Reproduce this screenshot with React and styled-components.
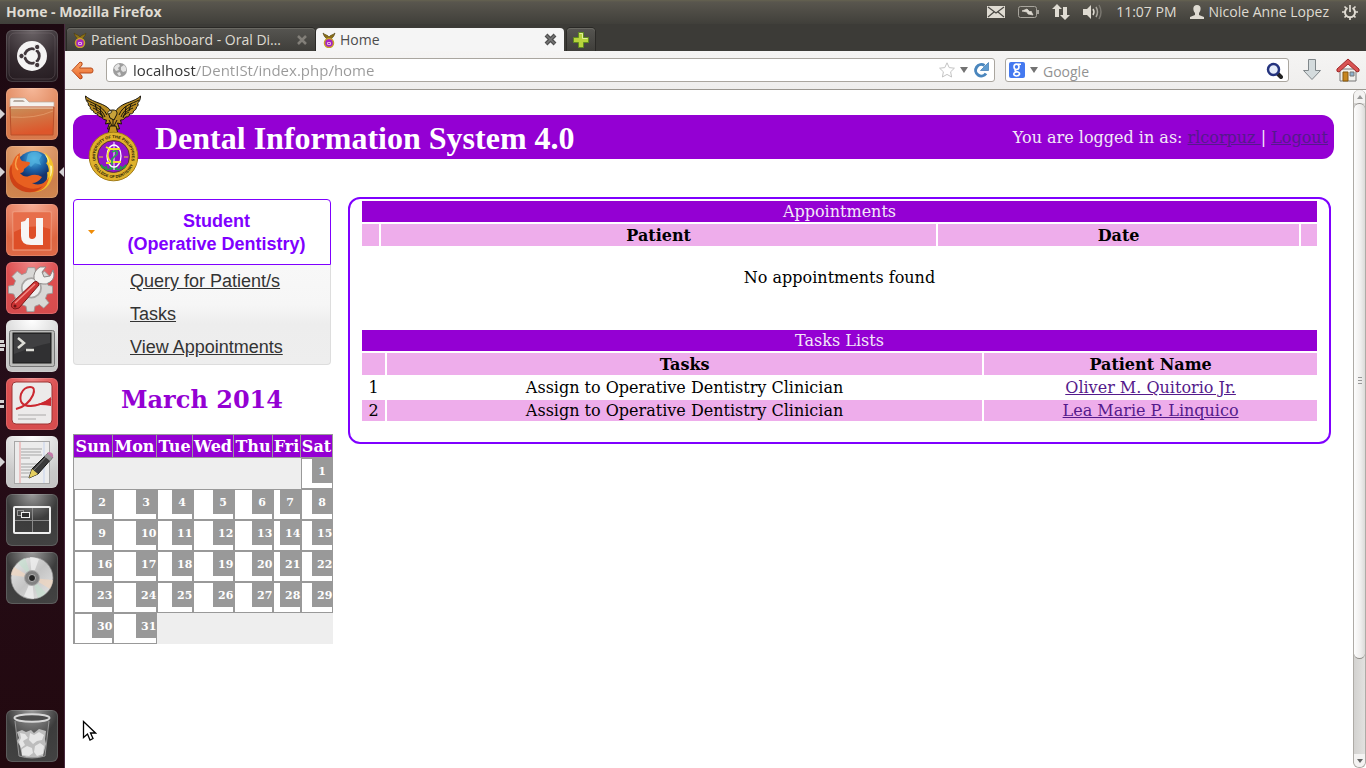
import React from "react";
import styled, { createGlobalStyle, css } from "styled-components";

const ui = '"Open Sans", "Noto Sans", sans-serif';
const serif = '"DejaVu Serif", serif';
const violet = "#9400d3";
const outline = "#7f00ff";

const GlobalStyle = createGlobalStyle`
  * { box-sizing: border-box; }
  body { margin: 0; background: #fff; }
  button { font: inherit; border: 0; padding: 0; background: none; cursor: pointer; }
  svg { display: block; flex: none; }
`;

const Desktop = styled.div`
  min-height: 100vh;
  display: flex;
  flex-direction: column;
  font-family: ${ui};
  font-size: 14px;
`;

/* ---------- top panel ---------- */
const TopPanel = styled.header`
  height: 24px;
  flex: none;
  display: flex;
  align-items: center;
  justify-content: space-between;
  padding: 0 8px 0 6px;
  background: linear-gradient(#656250, #59564e 2px, #403f3a);
  color: #dfdbd2;
  line-height: 20px;
`;
const PanelTitle = styled.strong`
  font-weight: 700;
`;
const Indicators = styled.div`
  display: flex;
  align-items: center;
  gap: 13px;
`;
const Session = styled.button`
  display: flex;
  align-items: center;
  gap: 5px;
  color: inherit;
`;

const Workspace = styled.div`
  flex: 1;
  display: flex;
`;

/* ---------- launcher ---------- */
const Launcher = styled.nav`
  width: 65px;
  flex: none;
  display: flex;
  flex-direction: column;
  gap: 6px;
  padding: 6px;
  border-right: 1px solid #4a2b40;
  background: linear-gradient(#1d0911, #260d19 50%, #22090f);
`;
const tints = {
  dark: "radial-gradient(circle at 50% 0, #6b6467, #342b30 55%, #241a1f)",
  folder: "radial-gradient(circle at 50% 0, #f6b899, #d9794c 70%, #d7784b)",
  fox: "radial-gradient(circle at 50% 0, #eeb184, #cc7f4c 70%, #d08850)",
  orange: "radial-gradient(circle at 50% 0, #f8ae97, #dd6541 70%, #de6b49)",
  red: "radial-gradient(circle at 50% 0, #ef8686, #dc4f50 45%, #d54b4d)",
  light: "radial-gradient(circle at 50% 0, #fff, #c9c9c9 70%, #c3c3c3)",
  grey: "radial-gradient(circle at 50% 0, #9b9b9b, #3c3c3c 45%, #434343)",
};
const Tile = styled.button`
  position: relative;
  width: 52px;
  height: 52px;
  flex: none;
  border-radius: 6px;
  background: ${(p) => tints[p.$tint]};
  box-shadow: inset 0 0 0 1px rgba(255, 255, 255, 0.14);
  ${(p) => p.$last && css`margin-top: auto;`}
`;
const Pips = styled.svg`
  position: absolute;
  top: 20px;
  ${(p) => (p.$right ? "right: -6px;" : "left: -6px;")}
`;

/* ---------- browser chrome ---------- */
const Browser = styled.main`
  flex: 1;
  min-width: 0;
  display: flex;
  flex-direction: column;
`;
const TabStrip = styled.div`
  height: 27px;
  flex: none;
  display: flex;
  align-items: flex-end;
  gap: 1px;
  padding-left: 2px;
  background: #3c3b37;
`;
const Tab = styled.div`
  height: 23px;
  width: 248px;
  display: flex;
  align-items: center;
  gap: 4px;
  padding: 0 7px 0 6px;
  border-radius: 4px 4px 0 0;
  ${(p) =>
    p.$active
      ? css`
          background: #f5f5f5;
          color: #4c4c4c;
        `
      : css`
          background: linear-gradient(#565551, #3f3e3a);
          box-shadow: 0 0 0 1px #2a2926, inset 0 1px #6a6963;
          color: #dfdbd2;
        `}
`;
const TabName = styled.button`
  flex: 1;
  min-width: 0;
  color: inherit;
  text-align: left;
  line-height: 20px;
  white-space: nowrap;
`;
const IconButton = styled.button`
  display: flex;
  align-items: center;
  justify-content: center;
`;
const NewTab = styled(IconButton)`
  width: 28px;
  height: 23px;
  margin-left: 2px;
  border-radius: 4px 4px 0 0;
  background: linear-gradient(#565551, #3f3e3a);
  box-shadow: 0 0 0 1px #2a2926, inset 0 1px #6a6963;
`;
const Toolbar = styled.div`
  height: 39px;
  flex: none;
  display: flex;
  align-items: center;
  gap: 10px;
  padding: 0 6px;
  border-bottom: 1px solid #9b9790;
  background: linear-gradient(#f5f4f3, #efeeed);
`;
const Field = styled.div`
  height: 24px;
  display: flex;
  align-items: center;
  gap: 5px;
  padding: 0 5px;
  border: 1px solid #aaa69f;
  border-radius: 3px;
  background: #fff;
  ${(p) => (p.$grow ? "flex: 1; min-width: 0; margin-left: 2px;" : "width: 284px; padding-left: 3px;")}
`;
const TextInput = styled.input`
  flex: 1;
  min-width: 0;
  height: 22px;
  border: 0;
  padding: 2px 0 0;
  outline: 0;
  background: none;
  font: 14px/20px ${ui};
  color: #929292;
  &::placeholder {
    color: #929292;
    opacity: 1;
  }
`;
const AddressInput = styled(TextInput)`
  font-size: 15px;
  padding-top: 0;
  background: linear-gradient(90deg, #333 63px, #999 63px);
  -webkit-background-clip: text;
  background-clip: text;
  color: transparent;
`;
const ToolButtons = styled.div`
  display: flex;
  align-items: center;
  gap: 14px;
  padding-left: 3px;
`;

/* ---------- viewport ---------- */
const Viewport = styled.div`
  flex: 1;
  display: flex;
  background: #fff;
`;
const Page = styled.div`
  flex: 1;
  min-width: 0;
  padding: 25px 19px 24px 8px;
  font-family: ${serif};
  font-size: 16px;
  line-height: 19px;
  color: #000;
`;
const Banner = styled.header`
  position: relative;
  height: 44px;
  display: flex;
  align-items: center;
  justify-content: space-between;
  padding: 0 6px 0 82px;
  border-radius: 12px;
  background: ${violet};
  color: #f3e8f8;
`;
const SealSpot = styled.div`
  position: absolute;
  left: 12px;
  top: -20px;
`;
const SiteName = styled.h1`
  margin: 0;
  padding-top: 1px;
  font: 700 32px/36px "Liberation Serif", serif;
  color: #fff;
`;
const Visited = styled.a`
  color: #551a8b;
  text-decoration: underline;
`;
const Columns = styled.div`
  display: flex;
  align-items: flex-start;
  gap: 15px;
  padding: 38px 3px 0 0;
`;
const Sidebar = styled.aside`
  width: 260px;
  flex: none;
  padding-top: 2px;
`;
const Menu = styled.section`
  width: 258px;
  font-family: "Liberation Sans", sans-serif;
  font-size: 18px;
  line-height: 23px;
`;
const MenuHead = styled.button`
  width: 100%;
  display: flex;
  align-items: center;
  padding: 9px 0 9px 14px;
  border: 1px solid ${outline};
  border-radius: 4px 4px 0 0;
  background: #fff;
  color: ${outline};
  font-weight: 700;
`;
const MenuLabel = styled.span`
  flex: 1;
  padding: 1px 0 0 8px;
  margin-bottom: -1px;
  text-align: center;
`;
const MenuList = styled.ul`
  margin: 0;
  padding: 0 0 0 56px;
  list-style: none;
  border: 1px solid #ddd;
  border-top: 0;
  border-radius: 0 0 4px 4px;
  background: linear-gradient(#f8f8f8, #f6f6f6 40%, #ededed 60%, #eee);
`;
const MenuItem = styled.li`
  height: 33px;
  padding-top: 5px;
  a {
    color: #333;
    text-decoration: underline;
  }
`;
const Month = styled.h2`
  width: 258px;
  margin: 20px 0;
  font-size: 24px;
  line-height: 29px;
  text-align: center;
  color: ${violet};
`;
const Calendar = styled.table`
  width: 260px;
  table-layout: fixed;
  border-collapse: separate;
  border-spacing: 0;
  border-left: 1px solid #999;
`;
const WeekDay = styled.th`
  height: 24px;
  padding: 0;
  border: 1px solid #999;
  border-left: 0;
  background: ${violet};
  color: #fff;
  white-space: nowrap;
`;
const Blank = styled.td`
  height: 31px;
  padding: 0;
  background: #eee;
`;
const Day = styled.td`
  height: 31px;
  padding: 0;
  border: 1px solid #999;
  vertical-align: top;
`;
const DayNumber = styled.div`
  width: 20px;
  height: 24px;
  margin-left: auto;
  padding: 5px;
  background: #999;
  color: #fff;
  font-size: 11px;
  font-weight: 700;
  line-height: 15px;
  text-align: center;
`;
const Panel = styled.section`
  flex: 1;
  min-width: 0;
  padding: 0 10px 19px;
  border: 2px solid ${outline};
  border-radius: 12px;
`;
const List = styled.table`
  width: 100%;
  table-layout: fixed;
  border-collapse: separate;
  border-spacing: 2px;
  text-align: center;
  td, th { padding: 0; height: 21px; }
`;
const Heading = styled.th`
  background: ${violet};
  color: #f3e8f8;
  font-weight: 400;
`;
const ColumnHead = styled.th`
  && { height: 22px; }
  background: #eeadeb;
`;
const Row = styled.tr`
  td { background: ${(p) => (p.$shaded ? "#eeadeb" : "#fff")}; }
`;
const Empty = styled.p`
  margin: 0;
  padding: 20px 0 41px;
  text-align: center;
`;

/* ---------- scrollbar ---------- */
const Scrollbar = styled.div`
  width: 13px;
  flex: none;
  display: flex;
  flex-direction: column;
  border: 1px solid #aeaba6;
  border-top: 0;
  border-radius: 6px;
  background: linear-gradient(90deg, #d3d2d0, #e2e1df);
`;
const Arrow = styled(IconButton)`
  height: 13px;
  border-radius: ${(p) => (p.$down ? "0 0 6px 6px" : "6px 6px 0 0")};
  background: #f4f3f2;
`;
const Thumb = styled.div`
  flex: ${(p) => p.$share};
  display: flex;
  align-items: center;
  justify-content: center;
  border: 1px solid #908d89;
  border-width: 1px 0;
  border-radius: 6px;
  background: linear-gradient(90deg, #fdfdfd, #efeeed 60%, #dcdbd9);
`;
const Trough = styled.div`
  flex: ${(p) => p.$share};
`;
const Cursor = styled.svg`
  position: fixed;
  left: 82px;
  top: 720px;
  pointer-events: none;
`;

/* ---------- drawings ---------- */
function Eagle() {
  return (
    <g stroke="#17130a" strokeWidth="1" strokeLinejoin="round">
      <path fill="#b98d22" d="M28 19c-4-8-12-10-17-12C6 5 3 3 .5 1c0 3 1 6 3 7-1 1 0 3 2 4-1 2 1 3 3 4 0 2 2 3 4 3 0 2 2 3 4 3 1 2 3 3 5 3l-1 4 4-1-2 6h12l-2-6 4 1-1-4c3 0 4-1 5-3 3 0 4-1 4-3 3 0 4-1 4-3 2-1 3-2 3-4 2-1 2-3 1-4 2-1 3-4 3-7-3 3-6 4-11 6-6 2-12 5-16 12z" />
      <path fill="none" strokeWidth="1" d="M2 5c6 4 15 5 20 15M5 9c6 3 12 5 15 13M8 13c5 2 8 4 10 9M12 17c4 2 5 3 6 6M54 5c-7 4-16 5-20 15M51 9c-6 3-12 5-15 13M48 13c-5 2-8 4-10 9M44 17c-4 2-5 3-6 6M24 25l4 8M32 25l-4 8M28 22v14M10 9l2 7M15 11l1 9M46 9l-2 7M41 11l-1 9" />
      <path fill="#c9a33a" d="M24 20c-1-4 1-5 4-5 4 0 5 3 3 6l-2 4-4-2z" />
      <path fill="#e9dcb0" strokeWidth=".7" d="M27 16c-3-1-5 1-4 3l3-1z" />
      <path fill="#c29420" d="M25 31h6l2 8H23z" />
    </g>
  );
}

function Seal() {
  return (
    <svg width="58" height="88" viewBox="0 0 58 88" role="img" aria-label="College of Dentistry seal">
      <Eagle />
      <circle cx="28.500" cy="61.500" r="24.300" fill="#dfb22c" stroke="#a27c18" />
      <circle cx="28.500" cy="61.500" r="16" fill="#9113c9" stroke="#4c3612" strokeWidth=".8" />
      <defs>
        <path id="arcTop" d="M15.600 74.400a18.300 18.300 0 1 1 25.800 0" />
        <path id="arcBottom" d="M7 61.500a21.500 21.500 0 0 0 43 0" />
      </defs>
      <text fontFamily="Liberation Sans, sans-serif" fontWeight="700" fontSize="4" fill="#1d1505">
        <textPath href="#arcTop" startOffset="50%" textAnchor="middle">UNIVERSITY OF THE PHILIPPINES</textPath>
      </text>
      <text fontFamily="Liberation Sans, sans-serif" fontWeight="700" fontSize="4" fill="#1d1505">
        <textPath href="#arcBottom" startOffset="50%" textAnchor="middle">COLLEGE OF DENTISTRY</textPath>
      </text>
      <path d="M16 70q6 7 12 3q7 4 13-3M18 73l-2-3M22 75l-1-4M26 75l-1-4M39 73l2-3M35 75l1-4M31 75l1-4" fill="none" stroke="#239a45" strokeWidth="1.600" />
      <ellipse cx="29" cy="61" rx="7" ry="11" fill="none" stroke="#fff" strokeWidth="1.300" />
      <path d="M29 47v28" stroke="#fff" />
      <path d="M35 54H25q-5 7 1 13h10M25 54l-4-2M21 68h4" fill="none" stroke="#f0e32d" strokeWidth="1.800" />
      <path d="M27 57q6-3 5 2l-5 5v6" fill="none" stroke="#2ba650" strokeWidth="1.700" />
      <path d="M15 61v2M17 61v2M40 61v2M42 61v2" stroke="#f0d02d" />
    </svg>
  );
}

function Favicon() {
  return (
    <svg width="14" height="16" viewBox="0 0 14 16" aria-hidden="true">
      <path d="M1 1c1 4 3 5 5 7h2c2-2 4-3 5-7-2 2-5 2-6 4C6 3 3 3 1 1z" fill="#8b7118" stroke="#4d3d10" strokeWidth=".6" />
      <circle cx="7" cy="11" r="4.500" fill="#a524c4" stroke="#caa029" strokeWidth="1.500" />
      <path d="M5.500 10.500h3v2h-3z" fill="none" stroke="#e8b5d9" />
    </svg>
  );
}

const art = {
  ubuntu: (
    <g>
      <rect x="3" y="3" width="46" height="46" rx="6" fill="none" stroke="#8a8286" strokeOpacity=".3" />
      <circle cx="26" cy="26" r="15" fill="#f5f4f4" />
      <circle cx="26" cy="26" r="7.200" fill="none" stroke="#41373c" strokeWidth="3" />
      <path d="M26 26H14M26 26l6-11M26 26l6 11" stroke="#f5f4f4" strokeWidth="1.500" />
      <circle cx="26" cy="26" r="5.700" fill="#f5f4f4" />
      <g fill="#41373c" stroke="#f5f4f4">
        <circle cx="15.500" cy="26" r="2.700" />
        <circle cx="31.200" cy="17" r="2.700" />
        <circle cx="31.200" cy="35" r="2.700" />
      </g>
    </g>
  ),
  folder: (
    <g>
      <path d="M5 10h14l4 4h25v6H4v-9z" fill="#f5f2ee" stroke="#b9a99b" strokeWidth=".7" />
      <path d="M8 12h9l2 2H7z" fill="#b8aca2" />
      <path d="M4 19h44l-1 28H5z" fill="url(#folderFill)" stroke="#b9502a" />
      <path d="M5 29q24 2 42-6" stroke="#f0b384" strokeOpacity=".5" fill="none" />
      <path d="M5 20h42" stroke="#f1dbc9" />
    </g>
  ),
  firefox: (
    <g>
      <circle cx="28" cy="24" r="19" fill="url(#globe)" />
      <path d="M22 8q8-5 14 1l-3 5 2 5-6-2-4 4-5-5z" fill="#55b4df" opacity=".7" />
      <path d="M38 6q12 8 9 23-4 17-20 17c11-2 16-12 14-20 3 2 2-6-1-9 2 0 2-6-2-11z" fill="#f3c22b" />
      <path d="M38 7q6 5 5 12l3 1q1 7-2 11 2-12-6-24z" fill="#fff0a0" />
      <path d="M6 18Q9 9 14 7q-1 5 2 8l7 1q2 1 0 3l-5 4q0 4-4 4 4 5 9 3 7-3 13 1-4 6-10 6 10 5 17-6-1 9-8 13-14 6-24-4Q1 32 4 20z" fill="#e86020" />
      <path d="M6 19q-2 14 9 20 12 7 22 1-8 9-21 5Q1 39 4 22z" fill="#ce4116" />
      <path d="M12 10q-5 9 0 14" stroke="#f7a24a" fill="none" strokeWidth="1.500" />
    </g>
  ),
  one: (
    <g>
      <rect x="7" y="8" width="38" height="38" fill="#de4f28" stroke="#f1a183" />
      <path d="M8 9h36v16Q26 19 8 28z" fill="#f08e6d" opacity=".5" />
      <path d="M15 18l4-1 2-3h2v18q0 3 3 3t4-3V14h7v27H25q-10 0-10-9z" fill="#f7f5f4" />
    </g>
  ),
  settings: (
    <g>
      <g transform="translate(2.500 3) scale(.88)">
        <path d="M22 3h8l1 6 5 2 5-4 6 6-4 5 2 5 5 1v8l-6 1-2 5 4 5-6 6-5-4-5 2-1 6h-8l-1-6-5-2-5 4-6-6 4-5-2-5-6-1v-8l6-1 2-5-4-5 6-6 5 4 5-2z" fill="#d8d7d5" stroke="#9c9a98" />
        <circle cx="26" cy="26" r="11" fill="#eee" stroke="#a8a5a3" strokeWidth="2" />
      </g>
      <path d="M31 21l-3-4q-1-8 6-12l6 0-4 5 2 5 6-1 3-6q3 8-3 12-4 3-7 2z" fill="#f1f0ee" stroke="#8b8886" />
      <path d="M9 47q-5-1-3-6l22-21q4-2 5 3L13 46z" fill="#cf3434" stroke="#7e1717" />
      <path d="M9 41l20-19" stroke="#f28d87" strokeWidth="1.500" />
      <circle cx="9" cy="44" r="1.500" fill="#6d1414" />
    </g>
  ),
  terminal: (
    <g>
      <rect x="3.500" y="10.500" width="45" height="36" rx="2" fill="#bbbbb9" stroke="#767676" />
      <rect x="7" y="13" width="38" height="30" fill="#303032" stroke="#191919" />
      <path d="M8 14h36v9q-15 3-36 11z" fill="#fff" opacity=".08" />
      <path d="M12 18l6 5-6 5" fill="none" stroke="#deded8" strokeWidth="2.500" />
      <path d="M20 30h8" stroke="#deded8" strokeWidth="2.500" />
    </g>
  ),
  pdf: (
    <g>
      <rect x="6" y="4" width="40" height="42" rx="4" fill="#eceaea" stroke="#9d3535" />
      <path d="M10 31q12-3 17-14 3-8-3-8-6 0-9 7-3 12 10 12 8 0 20-7" fill="none" stroke="#cb2931" strokeWidth="2" />
      <path d="M24 27q12 0 21-8v9q-10-2-21 0z" fill="#cb2931" />
      <path d="M12 37h28M12 41h18" stroke="#aaa8a8" />
    </g>
  ),
  notes: (
    <g>
      <rect x="8.500" y="5.500" width="35" height="42" fill="#ececec" stroke="#a7a7a7" />
      <path d="M14 6v41" stroke="#ea9b9b" />
      <path d="M38 6v41" stroke="#c6d3ee" />
      <path d="M15 13h21M15 16h20M15 19h21M15 22h9M15 28h20M15 31h17M15 34h10M15 37h12M15 41h9" stroke="#a5a5a5" />
      <path d="M23 42l3-9 16-16 5 4-15 17z" fill="#3a3a3a" stroke="#151515" />
      <path d="M27 35l14-15" stroke="#7b7b7b" />
      <path d="M23 42l3-9 6 5z" fill="#e5cf5f" />
      <path d="M38 20l4-3 5 4-3 4z" fill="#999" />
      <path d="M41 17l2-1q5 0 4 6z" fill="#c57bab" />
    </g>
  ),
  workspaces: (
    <g fill="none">
      <path d="M26.500 14v24M9 26.500h34" stroke="#8a8a8a" />
      <rect x="8" y="13" width="36" height="26" rx="1" stroke="#efefef" strokeWidth="2" />
      <rect x="11.500" y="16.500" width="6" height="5" stroke="#999" />
      <rect x="15.500" y="18.500" width="8" height="5" fill="#2e2e2e" stroke="#efefef" />
    </g>
  ),
  disc: (
    <g>
      <circle cx="26" cy="26" r="21" fill="url(#discFill)" stroke="#8d8d8d" strokeWidth=".7" />
      <path d="M26 26L8 15q-3 5-3 8zM26 26l18 11q3-5 3-9z" fill="#f1d6bf" opacity=".7" />
      <path d="M26 26L12 11q4-4 7-5zM26 26l14 15q-4 4-8 5z" fill="#c0e0cc" opacity=".55" />
      <path d="M26 26l-8 18q5 3 10 3zM26 26l7-19q-5-2-9-2z" fill="#f4f4f4" opacity=".7" />
      <circle cx="26" cy="26" r="7.500" fill="#828282" stroke="#aaa" />
      <circle cx="26" cy="26" r="3.500" fill="#242424" stroke="#ddd" strokeWidth=".7" />
    </g>
  ),
  trash: (
    <g>
      <path d="M9 9l4 37q13 4 26 0l4-37z" fill="#b7b7b7" fillOpacity=".18" />
      <path d="M11 22l5-2 4 2 5-2 3 3 5-4 7 2-1 8 1 5-3 12q-11 3-21 0l-2-10-3-5 2-3z" fill="#bdbdbd" />
      <path d="M14 23l5 1 3 4-5 3 2 4-4 3-2-6 2-4zM24 23l4 2 5-3 5 3-2 5-5 1-4 3-4-4zM16 39l5-3 5 2 1 5-4 3-7-1zM29 36l5-3 4 3-1 8-6 2-3-4z" fill="#e6e6e6" />
      <ellipse cx="26" cy="8" rx="17.500" ry="3.800" fill="#4d4d4d" stroke="#d8d8d8" strokeWidth="2" />
      <path d="M9 11l4 35q13 4 26 0l4-35" fill="none" stroke="#b5b5b5" strokeOpacity=".7" />
    </g>
  ),
};

const apps = [
  { art: "ubuntu", tint: "dark", label: "Dash home" },
  { art: "folder", tint: "folder", label: "Files", pips: 1 },
  { art: "firefox", tint: "fox", label: "Firefox", pips: 1, active: true },
  { art: "one", tint: "orange", label: "Ubuntu One" },
  { art: "settings", tint: "red", label: "System settings" },
  { art: "terminal", tint: "light", label: "Terminal", pips: 3 },
  { art: "pdf", tint: "red", label: "Document viewer", pips: 2 },
  { art: "notes", tint: "light", label: "Text editor", pips: 1 },
  { art: "workspaces", tint: "grey", label: "Workspaces" },
  { art: "disc", tint: "grey", label: "Disc" },
  { art: "trash", tint: "grey", label: "Trash", last: true },
];

function Pip({ count }) {
  const shapes = {
    1: "M0 1l5 5-5 5z",
    2: "M0 2h4v3H0zM0 7h4v3H0z",
    3: "M0 0h4v3H0zM0 4h5v3H0zM0 8h4v3H0z",
  };
  return (
    <Pips width="5" height="12" aria-hidden="true">
      <path d={shapes[count]} fill="#d5d2d4" />
    </Pips>
  );
}

function LauncherApp({ app }) {
  return (
    <Tile type="button" $tint={app.tint} $last={app.last} aria-label={app.label}>
      {app.pips && <Pip count={app.pips} />}
      <svg width="52" height="52" viewBox="0 0 52 52">{art[app.art]}</svg>
      {app.active && (
        <Pips $right width="5" height="12" aria-hidden="true">
          <path d="M5 1L0 6l5 5z" fill="#d5d2d4" />
        </Pips>
      )}
    </Tile>
  );
}

const Defs = styled.svg`
  position: absolute;
`;

function Gradients() {
  return (
    <Defs width="0" height="0" aria-hidden="true">
      <defs>
        <linearGradient id="folderFill" x2=".3" y2="1">
          <stop stopColor="#c8905a" />
          <stop offset="1" stopColor="#dd562b" />
        </linearGradient>
        <radialGradient id="globe" cx=".5" cy=".2">
          <stop stopColor="#4fc0ea" />
          <stop offset=".6" stopColor="#1d62a6" />
          <stop offset="1" stopColor="#14346f" />
        </radialGradient>
        <linearGradient id="discFill" x2="1" y2="1">
          <stop stopColor="#ececec" />
          <stop offset=".5" stopColor="#c4c4c4" />
          <stop offset="1" stopColor="#e6e6e6" />
        </linearGradient>
        <linearGradient id="backFill" x2="0" y2="1">
          <stop stopColor="#fba566" />
          <stop offset="1" stopColor="#e8672b" />
        </linearGradient>
      </defs>
    </Defs>
  );
}

const Caret = () => (
  <svg width="8" height="6" aria-hidden="true">
    <path d="M0 0h8L4 6z" fill="#737373" />
  </svg>
);

function Indicator() {
  return (
    <Indicators>
      <svg width="18" height="12" role="img" aria-label="Messages">
        <path d="M0 0h18v12H0z" fill="#dfdbd2" />
        <path d="M1 1l8 6 8-6M1 11l6-5M17 11l-6-5" fill="none" stroke="#4b4944" strokeWidth="1.200" />
      </svg>
      <svg width="21" height="12" role="img" aria-label="Battery">
        <rect x=".5" y=".5" width="18" height="11" rx="2" fill="none" stroke="#a8a59d" />
        <path d="M20 4v4" stroke="#a8a59d" strokeWidth="2" />
        <path d="M4 5l5-2 3 3 1-1 2 4-5-1-1-2z" fill="#dfdbd2" stroke="#dfdbd2" strokeWidth=".7" />
      </svg>
      <svg width="18" height="18" viewBox="0 0 18 18" role="img" aria-label="Network">
        <path d="M5 1l5 5H7v8H3V6H0zM13 17l-5-5h3V4h4v8h3z" fill="#dfdbd2" />
      </svg>
      <svg width="20" height="16" viewBox="0 0 20 16" role="img" aria-label="Sound">
        <path d="M0 5h4l4-4v14l-4-4H0z" fill="#dfdbd2" />
        <path d="M10 5q2 3 0 6" fill="none" stroke="#dfdbd2" strokeWidth="1.500" />
        <path d="M13 3q3 5 0 10" fill="none" stroke="#a8a59d" strokeWidth="1.500" />
        <path d="M16 1q4 7 0 14" fill="none" stroke="#7a7770" strokeWidth="1.500" />
      </svg>
      <time>11:07 PM</time>
      <Session type="button">
        <svg width="14" height="14" viewBox="0 0 14 14" aria-hidden="true">
          <path d="M7 0c5 0 4 6 2 8v2l5 2v2H0v-2l5-2V8C3 6 2 0 7 0z" fill="#dfdbd2" />
        </svg>
        Nicole Anne Lopez
      </Session>
      <svg width="16" height="16" viewBox="0 0 16 16" role="img" aria-label="System menu">
        <path d="M5.500 4a5 5 0 1 0 5 0" fill="none" stroke="#dfdbd2" strokeWidth="2" />
        <path d="M8 1v7M0 8h3M13 8h3M8 13v3M2.500 2.500l2 2M13.500 2.500l-2 2M2.500 13.500l2-2M13.500 13.500l-2-2" stroke="#dfdbd2" strokeWidth="1.700" />
      </svg>
    </Indicators>
  );
}

function Chrome() {
  return (
    <>
      <TabStrip>
        <Tab>
          <Favicon />
          <TabName type="button">Patient Dashboard - Oral Di…</TabName>
          <IconButton type="button" aria-label="Close Patient Dashboard tab">
            <svg width="12" height="12" viewBox="0 0 12 12">
              <path d="M2 2l8 8M10 2l-8 8" stroke="#827f79" strokeWidth="2.500" />
            </svg>
          </IconButton>
        </Tab>
        <Tab $active>
          <Favicon />
          <TabName type="button">Home</TabName>
          <IconButton type="button" aria-label="Close Home tab">
            <svg width="13" height="13" viewBox="0 0 13 13">
              <path d="M2 2l9 9M11 2l-9 9" stroke="#4f4f4f" strokeWidth="4" />
              <path d="M2.500 2.500l8 8M10.500 2.500l-8 8" stroke="#777" strokeWidth="1.500" />
            </svg>
          </IconButton>
        </Tab>
        <NewTab type="button" aria-label="New tab">
          <svg width="16" height="16" viewBox="0 0 16 16">
            <path d="M5.500.5h5v5h5v5h-5v5h-5v-5h-5v-5h5z" fill="#b7d33c" stroke="#5f8b20" />
            <path d="M6.500 1.500h3v5h5" fill="none" stroke="#e2f099" />
          </svg>
        </NewTab>
      </TabStrip>
      <Toolbar>
        <IconButton type="button" aria-label="Back">
          <svg width="23" height="19" viewBox="0 0 23 19">
            <path d="M9 1q3 0 2 3L8.500 7H20q2 0 2 2.500T20 12H8.500l2.500 3q1 3-2 3L1 9.500z" fill="url(#backFill)" stroke="#b84a1b" />
          </svg>
        </IconButton>
        <Field $grow>
          <svg width="16" height="16" viewBox="0 0 16 16" aria-hidden="true">
            <circle cx="8" cy="8" r="7" fill="#9d9d9d" />
            <path d="M2 6q2-4 5-4l1 2-2 2 1 2-3 1zM9 5l3-2q3 3 2 6l-3 1-2-2zM5 11l3-1 1 3-2 1z" fill="#e3e3e3" />
          </svg>
          <AddressInput aria-label="Address" defaultValue="localhost/DentISt/index.php/home" />
          <IconButton type="button" aria-label="Bookmark this page">
            <svg width="16" height="16" viewBox="0 0 16 16">
              <path d="M8 .8l2.200 4.800 5.200.6-3.800 3.600 1 5.200L8 12.400 3.400 15l1-5.200L.6 6.200l5.200-.6z" fill="#fff" stroke="#c3c3c3" />
            </svg>
          </IconButton>
          <IconButton type="button" aria-label="Show history"><Caret /></IconButton>
          <IconButton type="button" aria-label="Reload">
            <svg width="16" height="16" viewBox="0 0 16 16">
              <path d="M13 11.500A5.700 5.700 0 1 1 11.500 3.500" fill="none" stroke="#4a86bd" strokeWidth="3" />
              <path d="M15.500.5v8h-8z" fill="#5f9bd0" stroke="#3d78af" strokeWidth=".7" />
            </svg>
          </IconButton>
        </Field>
        <Field>
          <svg width="16" height="16" viewBox="0 0 16 16" aria-hidden="true">
            <rect width="16" height="16" rx="2" fill="#4479f0" />
            <g fill="none" stroke="#fff" strokeWidth="1.600">
              <ellipse cx="7.500" cy="4.800" rx="2.500" ry="2.700" />
              <path d="M9 2.200h3M7 7.500q-2 1.500 0 2 4 1 3.500 2.800Q10 14 7.500 14T4.700 12.200Q4.800 10.500 7.500 10" />
            </g>
          </svg>
          <Caret />
          <TextInput aria-label="Search" placeholder="Google" />
          <IconButton type="button" aria-label="Run search">
            <svg width="17" height="17" viewBox="0 0 17 17">
              <path d="M11 11l4 4" stroke="#222" strokeWidth="4" strokeLinecap="round" />
              <circle cx="7.500" cy="7.500" r="5.500" fill="#e5ecfa" stroke="#25347f" strokeWidth="2.500" />
            </svg>
          </IconButton>
        </Field>
        <ToolButtons>
          <IconButton type="button" aria-label="Downloads">
            <svg width="20" height="22" viewBox="0 0 20 22">
              <path d="M6.500.5h7v11h5L10 20.500 1.500 11.500h5z" fill="#d4dbdd" stroke="#80878a" />
            </svg>
          </IconButton>
          <IconButton type="button" aria-label="Home page">
            <svg width="24" height="24" viewBox="0 0 24 24">
              <path d="M4 11h16v12H4z" fill="#f0efec" stroke="#777" />
              <path d="M7 14h5v9H7z" fill="#c78620" stroke="#87580e" />
              <path d="M14 14h4v4h-4z" fill="#8fb2cf" stroke="#777" />
              <path d="M12 1l11 10q1 3-2 3l-9-8-9 8q-3 0-2-3z" fill="#d95353" stroke="#a12929" />
            </svg>
          </IconButton>
        </ToolButtons>
      </Toolbar>
    </>
  );
}

const weekDays = [["Sun", 39], ["Mon", 44], ["Tue", 36], ["Wed", 41], ["Thu", 39], ["Fri", 28], ["Sat", 32]];
const DayCol = styled.col`
  width: ${(p) => p.$w}px;
`;
const weeks = [0, 1, 2, 3, 4, 5].map((w) => weekDays.map((_, d) => w * 7 + d - 5));

function MonthView() {
  return (
    <>
      <Month>March 2014</Month>
      <Calendar aria-label="March 2014">
        <colgroup>{weekDays.map(([name, w]) => <DayCol key={name} $w={w} />)}</colgroup>
        <thead>
          <tr>{weekDays.map(([name]) => <WeekDay key={name} scope="col">{name}</WeekDay>)}</tr>
        </thead>
        <tbody>
          {weeks.map((days, i) => (
            <tr key={i}>
              {days.map((n) => n < 1 || n > 31
                ? <Blank key={n} />
                : <Day key={n}><DayNumber>{n}</DayNumber></Day>)}
            </tr>
          ))}
        </tbody>
      </Calendar>
    </>
  );
}

const Col = styled.col`
  width: ${(p) => p.$w};
`;
const patients = ["Oliver M. Quitorio Jr.", "Lea Marie P. Linquico"];

function Lists() {
  return (
    <Panel>
      <List>
        <colgroup><Col $w="17px" /><Col $w="auto" /><Col $w="38%" /><Col $w="16px" /></colgroup>
        <thead>
          <tr><Heading colSpan={4}>Appointments</Heading></tr>
          <tr><ColumnHead /><ColumnHead>Patient</ColumnHead><ColumnHead>Date</ColumnHead><ColumnHead /></tr>
        </thead>
      </List>
      <Empty>No appointments found</Empty>
      <List>
        <colgroup><Col $w="23px" /><Col $w="auto" /><Col $w="35%" /></colgroup>
        <thead>
          <tr><Heading colSpan={3}>Tasks Lists</Heading></tr>
          <tr><ColumnHead /><ColumnHead>Tasks</ColumnHead><ColumnHead>Patient Name</ColumnHead></tr>
        </thead>
        <tbody>
          {patients.map((name, i) => (
            <Row key={name} $shaded={i % 2 === 1}>
              <td>{i + 1}</td>
              <td>Assign to Operative Dentistry Clinician</td>
              <td><Visited href="#patient">{name}</Visited></td>
            </Row>
          ))}
        </tbody>
      </List>
    </Panel>
  );
}

export default function App() {
  return (
    <Desktop>
      <GlobalStyle />
      <Gradients />
      <TopPanel>
        <PanelTitle>Home - Mozilla Firefox</PanelTitle>
        <Indicator />
      </TopPanel>
      <Workspace>
        <Launcher aria-label="Launcher">
          {apps.map((app) => <LauncherApp key={app.label} app={app} />)}
        </Launcher>
        <Browser>
          <Chrome />
          <Viewport>
            <Page>
              <Banner>
                <SealSpot><Seal /></SealSpot>
                <SiteName>Dental Information System 4.0</SiteName>
                <div>
                  You are logged in as: <Visited href="#profile">rlcorpuz </Visited>| <Visited href="#logout">Logout</Visited>
                </div>
              </Banner>
              <Columns>
                <Sidebar>
                  <Menu>
                    <MenuHead type="button" aria-expanded="true">
                      <svg width="7" height="4" aria-hidden="true"><path d="M0 0h7L3.500 4z" fill="#ef8c08" /></svg>
                      <MenuLabel>Student<br />(Operative Dentistry)</MenuLabel>
                    </MenuHead>
                    <MenuList>
                      {["Query for Patient/s", "Tasks", "View Appointments"].map((t) => (
                        <MenuItem key={t}><a href="#menu">{t}</a></MenuItem>
                      ))}
                    </MenuList>
                  </Menu>
                  <MonthView />
                </Sidebar>
                <Lists />
              </Columns>
            </Page>
            <Scrollbar>
              <Arrow type="button" aria-label="Scroll up">
                <svg width="6" height="4"><path d="M0 4h6L3 0z" fill="#999" /></svg>
              </Arrow>
              <Thumb $share={556}>
                <svg width="4" height="8"><path d="M0 .5h4M0 3.500h4M0 6.500h4" stroke="#999" /></svg>
              </Thumb>
              <Trough $share={95} />
              <Arrow $down type="button" aria-label="Scroll down">
                <svg width="6" height="4"><path d="M0 0h6L3 4z" fill="#666" /></svg>
              </Arrow>
            </Scrollbar>
          </Viewport>
        </Browser>
      </Workspace>
      <Cursor width="15" height="22" viewBox="0 0 15 22" aria-hidden="true">
        <path d="M1.500 1.500v16l4-3.500 2.500 6 3-1.500-2.500-5.500h5z" fill="#fff" stroke="#000" strokeWidth="1.300" />
      </Cursor>
    </Desktop>
  );
}
